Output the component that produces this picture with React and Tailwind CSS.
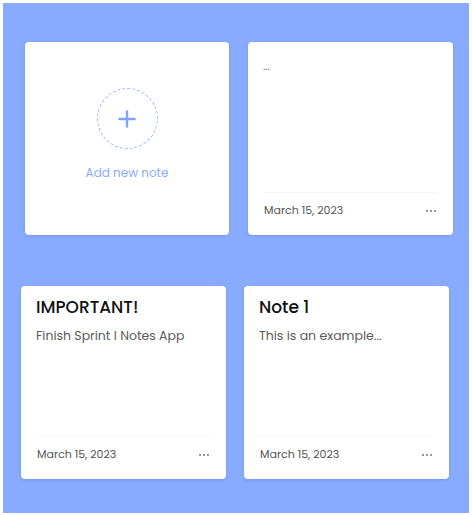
import { Plus } from 'lucide-react'

const font = { fontFamily: 'Poppins, Inter, "Noto Sans", sans-serif' }

function Dots() {
  return (
    <div className="flex items-center gap-[2px]">
      <span className="h-[2px] w-[2px] rounded-full bg-[#777]" />
      <span className="h-[2px] w-[2px] rounded-full bg-[#777]" />
      <span className="h-[2px] w-[2px] rounded-full bg-[#777]" />
    </div>
  )
}

function AddCard() {
  return (
    <div className="flex h-[193px] w-[204px] flex-col items-center rounded-[4px] bg-white pt-[46px] shadow-[0_1px_3px_rgba(40,60,140,0.18)]">
      <div className="flex h-[61px] w-[61px] items-center justify-center rounded-full border-[1.5px] border-dashed border-[#9ab6ff]">
        <Plus size={26} strokeWidth={2.2} className="text-[#7fa2ff]" />
      </div>
      <p className="mt-[16px] text-[12px] leading-[15px] text-[#8aabff]">Add new note</p>
    </div>
  )
}

function NoteCard({ title, body, date = 'March 15, 2023', placeholder }) {
  return (
    <div className="flex h-[193px] w-[205px] flex-col rounded-[4px] bg-white px-[15px] shadow-[0_1px_3px_rgba(40,60,140,0.18)]">
      <div className="flex-1">
        {placeholder ? (
          <p className="pt-[17px] text-[11px] leading-[14px] text-[#777]">...</p>
        ) : (
          <>
            <h3 className="pt-[11px] text-[17px] font-medium leading-[20px] text-[#111]">{title}</h3>
            <p className="mt-[11px] text-[12.5px] leading-[15px] text-[#5a5a5a]">{body}</p>
          </>
        )}
      </div>
      <div className="flex items-center justify-between border-t border-[#f7f7f7] pb-[18px] pl-px pr-[2px] pt-[11px]">
        <span className="text-[11px] leading-[13px] text-[#555]">{date}</span>
        <Dots />
      </div>
    </div>
  )
}

export default function App() {
  return (
    <div className="h-[515px] w-[472px] bg-white pb-[2px] pl-[3px] pr-[3px] pt-[3px]" style={font}>
      <div className="flex h-full w-full flex-col bg-[#88aaff] pt-[39px]">
        <div className="flex gap-[19px] pl-[22px]">
          <AddCard />
          <NoteCard placeholder />
        </div>
        <div className="mt-[51px] flex gap-[18px] pl-[18px]">
          <NoteCard title="IMPORTANT!" body="Finish Sprint I Notes App" />
          <NoteCard title="Note 1" body="This is an example..." />
        </div>
      </div>
    </div>
  )
}
